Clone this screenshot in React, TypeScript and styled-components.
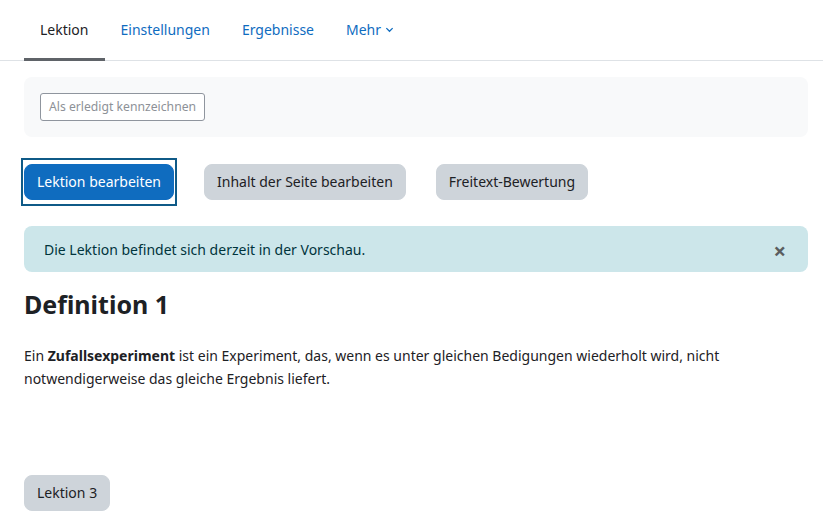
import React from "react";
import styled, { createGlobalStyle } from "styled-components";

const Global = createGlobalStyle`
  html, body { margin: 0; padding: 0; background: #fff; }
  body {
    font-family: "Noto Sans", "Open Sans", sans-serif;
    font-size: 14px;
    line-height: 1.5;
    color: #1d2125;
  }
  * { box-sizing: border-box; }
`;

const Page = styled.div`
  width: 823px;
`;

const Nav = styled.nav`
  display: flex;
  height: 61px;
  padding-left: 24px;
  border-bottom: 1px solid #dee2e6;
`;

const Tab = styled.a<{ $active?: boolean }>`
  display: flex;
  align-items: center;
  gap: 4px;
  padding: 0 16px;
  height: 61px;
  margin-bottom: -1px;
  color: ${(p) => (p.$active ? "#1d2125" : "#0f6cbf")};
  border-bottom: 3px solid ${(p) => (p.$active ? "#5f6368" : "transparent")};
  text-decoration: none;
  font-size: 14px;
  cursor: pointer;
`;

const Content = styled.main`
  padding: 16px 15px 0 24px;
  display: flex;
  flex-direction: column;
`;

const Region = styled.div`
  background: #f8f9fa;
  border-radius: 8px;
  padding: 16px;
  height: 60px;
`;

const SmallButton = styled.button`
  font-family: inherit;
  font-size: 12.2px;
  line-height: 20px;
  height: 28px;
  padding: 3px 8px;
  color: #8d9197;
  background: #fff;
  border: 1px solid #8f959e;
  border-radius: 3px;
`;

const ButtonRow = styled.div`
  display: flex;
  align-items: center;
  gap: 30px;
  margin-top: 21px;
`;

const FocusRing = styled.span`
  display: inline-flex;
  margin-left: -3px;
  margin-right: -3px;
  padding: 4px 1px;
  border: 2px solid #0f5a87;
`;

const Button = styled.button<{ $primary?: boolean }>`
  font-family: inherit;
  font-size: 14px;
  line-height: 22px;
  height: 36px;
  padding: 6px 12px;
  border: 1px solid ${(p) => (p.$primary ? "#0f6cbf" : "#ced4da")};
  border-radius: 8px;
  background: ${(p) => (p.$primary ? "#0f6cbf" : "#ced4da")};
  color: ${(p) => (p.$primary ? "#fff" : "#1d2125")};
  white-space: nowrap;
`;

const Alert = styled.div`
  display: flex;
  align-items: center;
  justify-content: space-between;
  margin-top: 20px;
  height: 46px;
  padding: 0 20px;
  background: #cce6ea;
  color: #00343c;
  border-radius: 8px;
  font-size: 14px;
`;

const Close = styled.span`
  color: #5a5d60;
  font-size: 22px;
  font-weight: 700;
  line-height: 1;
  margin-top: 2px;
  margin-right: 2px;
`;

const Heading = styled.h3`
  margin: 17px 0 0;
  font-size: 25px;
  font-weight: 700;
  line-height: 1.2;
  color: #1d2125;
`;

const Text = styled.p`
  margin: 25px 0 0;
  font-size: 14px;
  line-height: 23px;
  width: 760px;
`;

const Footer = styled.div`
  margin-top: 85px;
  display: flex;
`;

export default function App() {
  return (
    <Page>
      <Global />
      <Nav>
        <Tab $active>Lektion</Tab>
        <Tab>Einstellungen</Tab>
        <Tab>Ergebnisse</Tab>
        <Tab>
          Mehr
          <svg width="9" height="9" viewBox="0 0 10 10" fill="none">
            <path d="M1.5 3.5 L5 7 L8.5 3.5" stroke="#0f6cbf" strokeWidth="1.4" />
          </svg>
        </Tab>
      </Nav>
      <Content>
        <Region>
          <SmallButton>Als erledigt kennzeichnen</SmallButton>
        </Region>
        <ButtonRow>
          <FocusRing>
            <Button $primary>Lektion bearbeiten</Button>
          </FocusRing>
          <Button>Inhalt der Seite bearbeiten</Button>
          <Button>Freitext-Bewertung</Button>
        </ButtonRow>
        <Alert>
          <span>Die Lektion befindet sich derzeit in der Vorschau.</span>
          <Close>×</Close>
        </Alert>
        <Heading>Definition 1</Heading>
        <Text>
          Ein <b>Zufallsexperiment</b> ist ein Experiment, das, wenn es unter gleichen Bedigungen
          wiederholt wird, nicht notwendigerweise das gleiche Ergebnis liefert.
        </Text>
        <Footer>
          <Button>Lektion 3</Button>
        </Footer>
      </Content>
    </Page>
  );
}
